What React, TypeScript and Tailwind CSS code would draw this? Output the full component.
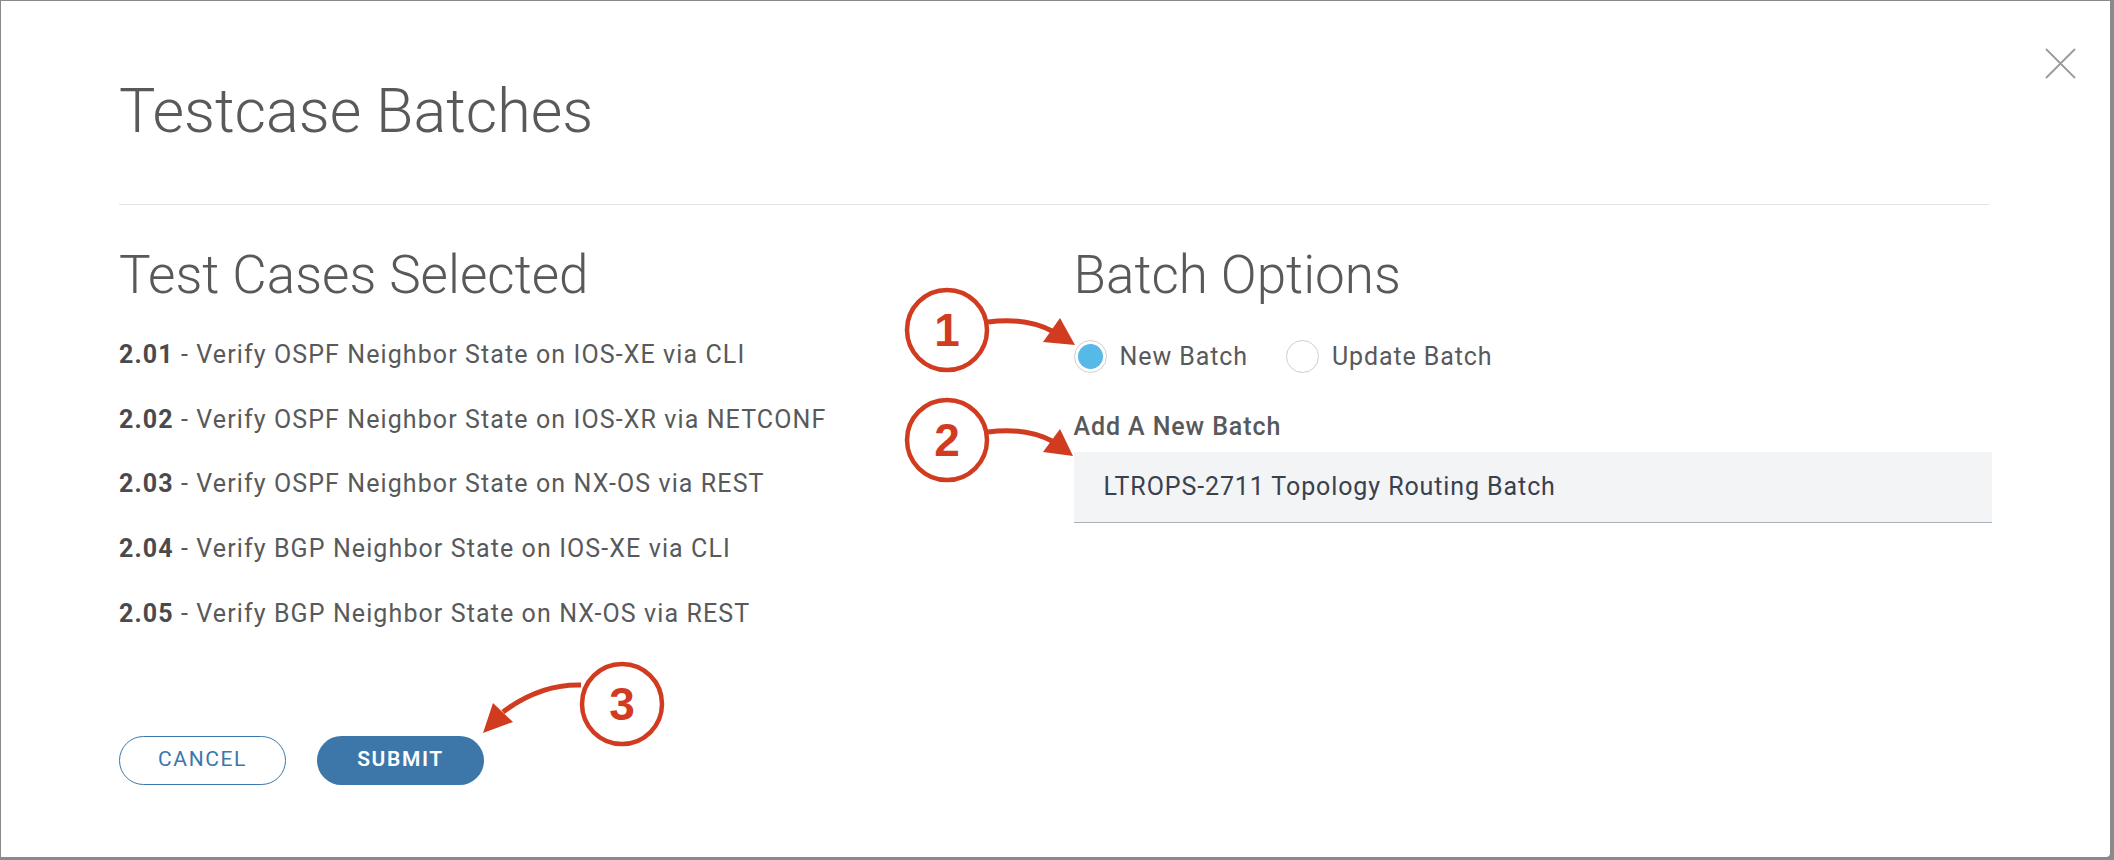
import React, { useState } from "react";

const cases = [
  { id: "2.01", text: "Verify OSPF Neighbor State on IOS-XE via CLI" },
  { id: "2.02", text: "Verify OSPF Neighbor State on IOS-XR via NETCONF" },
  { id: "2.03", text: "Verify OSPF Neighbor State on NX-OS via REST" },
  { id: "2.04", text: "Verify BGP Neighbor State on IOS-XE via CLI" },
  { id: "2.05", text: "Verify BGP Neighbor State on NX-OS via REST" },
];

const RED = "#d13b1f";

// numbered callouts drawn over the dialog
const Callouts = () => (
  <svg
    className="absolute left-0 top-0 pointer-events-none"
    width="2114"
    height="860"
    viewBox="0 0 2114 860"
  >
    {[
      { cx: 947, cy: 330, n: "1" },
      { cx: 947, cy: 440, n: "2" },
      { cx: 622, cy: 704, n: "3" },
    ].map((c) => (
      <g key={c.n}>
        <circle cx={c.cx} cy={c.cy} r="40" fill="white" stroke={RED} strokeWidth="4.5" />
        <text
          x={c.cx}
          y={c.cy + 16}
          textAnchor="middle"
          fontSize="46"
          fontWeight="700"
          fill={RED}
          fontFamily="'Liberation Sans', Arial, sans-serif"
        >
          {c.n}
        </text>
      </g>
    ))}
    <path d="M988 322 Q1025 317 1052 331" fill="none" stroke={RED} strokeWidth="5" />
    <polygon points="1060,318 1043,342 1075,345" fill={RED} />
    <path d="M988 432 Q1025 427 1052 441" fill="none" stroke={RED} strokeWidth="5" />
    <polygon points="1060,429 1043,452 1073,456" fill={RED} />
    <path d="M581 685 Q540 684 503 712" fill="none" stroke={RED} strokeWidth="5" />
    <polygon points="493,703 513,722 483,733" fill={RED} />
  </svg>
);

const Radio = ({ checked, label, onClick }) => (
  <label className="flex items-center cursor-pointer" onClick={onClick}>
    <span className="w-[33px] h-[33px] rounded-full border border-[#cfcfcf] bg-white flex items-center justify-center">
      {checked && <span className="w-[25px] h-[25px] rounded-full bg-[#56b9e7]" />}
    </span>
    <span className="ml-[13px] text-[25px] tracking-[0.9px] text-[#58595b]">{label}</span>
  </label>
);

const App = () => {
  const [mode, setMode] = useState("new");
  const [name, setName] = useState("LTROPS-2711 Topology Routing Batch");

  return (
    <div
      className="relative w-[2114px] h-[860px] bg-[#8a8a8a] pt-px pl-px pr-[4px] pb-[3px] overflow-hidden"
      style={{ fontFamily: "Roboto, 'Liberation Sans', sans-serif" }}
    >
      <div className="relative w-full h-full bg-white rounded-br-[4px] px-[118px] pt-[80px]">
        <button className="absolute left-[2043px] top-[46px] w-[34px] h-[34px]">
          <svg width="34" height="34" viewBox="0 0 34 34">
            <path d="M2 2 L31 31 M31 2 L2 31" stroke="#9b9b9b" strokeWidth="1.8" />
          </svg>
        </button>

        <h1 className="text-[61px] leading-[61px] font-light text-[#58595b]">Testcase Batches</h1>
        <div className="mt-[62px] h-px bg-[#e4e4e4] mr-[3px]" />

        <div className="grid grid-cols-2 gap-x-[36px] mt-[44px]">
          <div>
            <h2 className="text-[53px] leading-[53px] font-light text-[#58595b]">Test Cases Selected</h2>
            <div className="mt-[21px] flex flex-col">
              {cases.map((c) => (
                <div key={c.id} className="text-[25px] leading-[64.7px] tracking-[1.1px] text-[#58595b]">
                  <span className="font-bold text-[#4a4a4c]">{c.id}</span> - {c.text}
                </div>
              ))}
            </div>
            <div className="mt-[89px] flex gap-[31px]">
              <button className="w-[167px] h-[49px] rounded-full border border-[#3a77ad] text-[#3a77ad] text-[21px] tracking-[1.6px]">
                CANCEL
              </button>
              <button className="w-[167px] h-[49px] rounded-full bg-[#3d77aa] text-white text-[21px] font-semibold tracking-[1.6px]">
                SUBMIT
              </button>
            </div>
          </div>

          <div>
            <h2 className="text-[53px] leading-[53px] font-light text-[#58595b]">Batch Options</h2>
            <div className="mt-[36px] flex gap-[38px]">
              <Radio checked={mode === "new"} label="New Batch" onClick={() => setMode("new")} />
              <Radio checked={mode === "update"} label="Update Batch" onClick={() => setMode("update")} />
            </div>
            <div className="mt-[39px] text-[25px] leading-[24px] tracking-[0.9px] font-medium text-[#58595b]">Add A New Batch</div>
            <input
              value={name}
              onChange={(e) => setName(e.target.value)}
              className="mt-[13px] w-full h-[71px] bg-[#f3f4f6] border-b border-[#aab1b9] pl-[30px] text-[25px] tracking-[0.9px] text-[#39404e] outline-none"
            />
          </div>
        </div>
      </div>
      <Callouts />
    </div>
  );
};

export default App;
